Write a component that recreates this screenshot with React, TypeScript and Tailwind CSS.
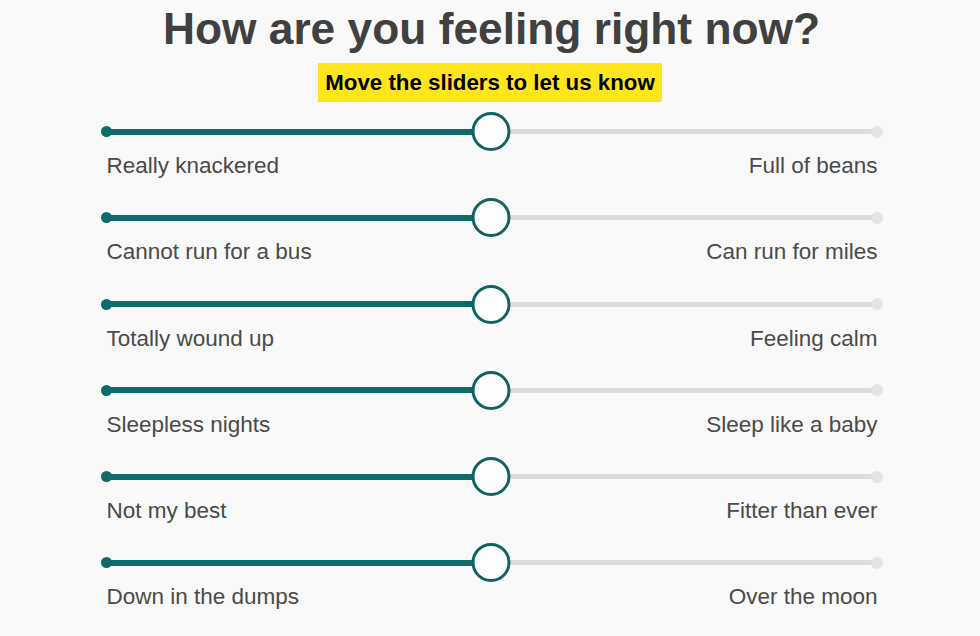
import { useState } from 'react';

const scales = [
  { low: 'Really knackered', high: 'Full of beans' },
  { low: 'Cannot run for a bus', high: 'Can run for miles' },
  { low: 'Totally wound up', high: 'Feeling calm' },
  { low: 'Sleepless nights', high: 'Sleep like a baby' },
  { low: 'Not my best', high: 'Fitter than ever' },
  { low: 'Down in the dumps', high: 'Over the moon' },
];

function MoodSlider({ low, high }: { low: string; high: string }) {
  const [value] = useState(50);

  return (
    <div className="flex flex-col">
      {/* Track */}
      <div className="relative h-[40px]">
        <div
          className="absolute left-[5px] top-[17px] h-[6px] rounded-full bg-[#0f6b6a]"
          style={{ width: `calc((100% - 11px) * ${value / 100})` }}
        />
        <div
          className="absolute right-[6px] top-[17.5px] h-[5px] rounded-full bg-[#dcdcdc]"
          style={{ width: `calc((100% - 11px) * ${1 - value / 100})` }}
        />
        <div className="absolute left-0 top-[14.5px] h-[11px] w-[11px] rounded-full bg-[#0f6b6a]" />
        <div className="absolute right-0 top-[14px] h-[12px] w-[12px] rounded-full bg-[#e4e4e4]" />
        <div
          className="absolute top-[0.5px] h-[39px] w-[39px] -translate-x-1/2 rounded-full border-[3px] border-[#0f6362] bg-[#fdfdfd]"
          style={{ left: `calc(5px + (100% - 11px) * ${value / 100})` }}
        />
      </div>
      {/* Labels */}
      <div className="mt-[1.5px] flex justify-between pl-[6px] pr-[5px] text-[22.5px] leading-[26px] text-[#4a4a4a]">
        <span>{low}</span>
        <span>{high}</span>
      </div>
    </div>
  );
}

export default function App() {
  return (
    <div
      className="min-h-screen w-full bg-[#f9f9f9] flex flex-col items-center pt-[7px]"
      style={{ fontFamily: '"Liberation Sans", Arial, sans-serif' }}
    >
      <h1 className="text-[44.3px] leading-[44px] font-bold text-[#404040] ml-[3px]">
        How are you feeling right now?
      </h1>
      <div className="mt-[12px] h-[39px] flex items-center bg-[#ffe51c] px-[7px] text-[22.3px] font-bold text-black">
        Move the sliders to let us know
      </div>

      <div className="mt-[9.5px] w-[782px] ml-[3px] flex flex-col gap-[18.8px]">
        {scales.map((s) => (
          <MoodSlider key={s.low} low={s.low} high={s.high} />
        ))}
      </div>
    </div>
  );
}
